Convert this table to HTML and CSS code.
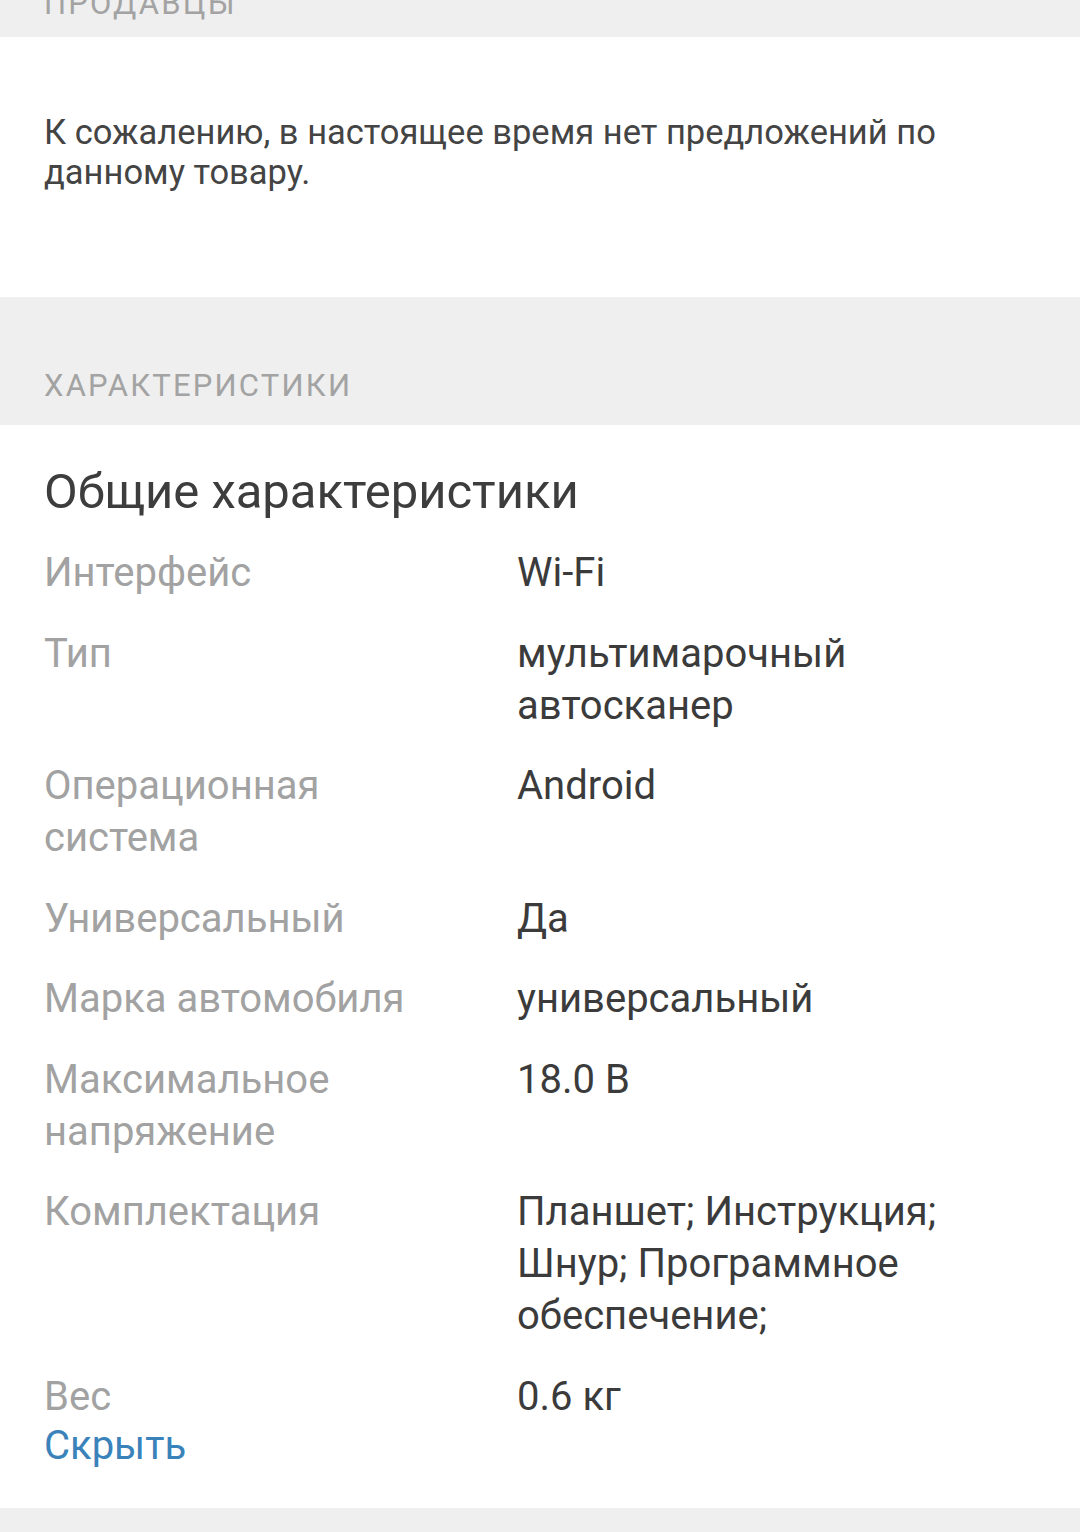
FILE: index.html
```html
<!DOCTYPE html>
<html lang="ru">
<head>
<meta charset="utf-8">
<link rel="stylesheet" href="styles.css">
</head>
<body>
<div class="band band-cut"><span class="band-title">ПРОДАВЦЫ</span></div>
<section class="panel notice">
  <p class="notice-text">К сожалению, в настоящее время нет предложений по данному товару.</p>
</section>
<div class="band band-full"><span class="band-title">ХАРАКТЕРИСТИКИ</span></div>
<section class="panel specs">
  <h2 class="specs-title">Общие характеристики</h2>
  <dl class="spec-list">
    <div class="spec-row"><dt>Интерфейс</dt><dd>Wi-Fi</dd></div>
    <div class="spec-row"><dt>Тип</dt><dd>мультимарочный автосканер</dd></div>
    <div class="spec-row"><dt>Операционная система</dt><dd>Android</dd></div>
    <div class="spec-row"><dt>Универсальный</dt><dd>Да</dd></div>
    <div class="spec-row"><dt>Марка автомобиля</dt><dd>универсальный</dd></div>
    <div class="spec-row"><dt>Максимальное напряжение</dt><dd>18.0 В</dd></div>
    <div class="spec-row"><dt>Комплектация</dt><dd>Планшет; Инструкция; Шнур; Программное обеспечение;</dd></div>
    <div class="spec-row"><dt>Вес</dt><dd>0.6 кг</dd></div>
  </dl>
  <a class="hide-link" href="#">Скрыть</a>
</section>
<div class="band band-bottom"></div>
</body>
</html>
```

FILE: styles.css
```css
html {
  background: #efefef;
}

body {
  margin: 0;
  padding: 0;
  background: #efefef;
  font-family: Roboto, "Noto Sans", "Liberation Sans", sans-serif;
}

.band {
  background: #efefef;
  display: flex;
  align-items: flex-end;
  padding: 0 44px;
  box-sizing: border-box;
  overflow: hidden;
}

.band-title {
  font-size: 31px;
  line-height: 40px;
  color: #a3a3a3;
  text-transform: uppercase;
  letter-spacing: 2.2px;
  white-space: nowrap;
}

.band-cut {
  height: 37px;
  padding-bottom: 13px;
}

.band-full {
  height: 128px;
  padding-bottom: 19px;
}

.band-bottom {
  height: 40px;
}

.panel {
  background: #ffffff;
  padding: 0 44px;
}

.notice {
  padding-top: 75px;
  padding-bottom: 105px;
}

.notice-text {
  margin: 0;
  font-size: 34.5px;
  line-height: 40px;
  color: #444444;
}

.specs {
  padding-top: 39px;
  padding-bottom: 39px;
}

.specs-title {
  margin: 0 0 27px;
  font-size: 49px;
  line-height: 56px;
  font-weight: 400;
  color: #3d3d3d;
}

.spec-list {
  margin: 0;
  display: flex;
  flex-direction: column;
  gap: 28.5px;
}

.spec-row {
  display: grid;
  grid-template-columns: 473px 1fr;
  font-size: 40px;
  line-height: 52px;
}

.spec-row dt {
  color: #a2a2a2;
  padding-right: 60px;
}

.spec-row dd {
  margin: 0;
  color: #3b3b3b;
}

.hide-link {
  display: block;
  font-size: 40px;
  line-height: 46px;
  color: #3a82ba;
  text-decoration: none;
}
```
